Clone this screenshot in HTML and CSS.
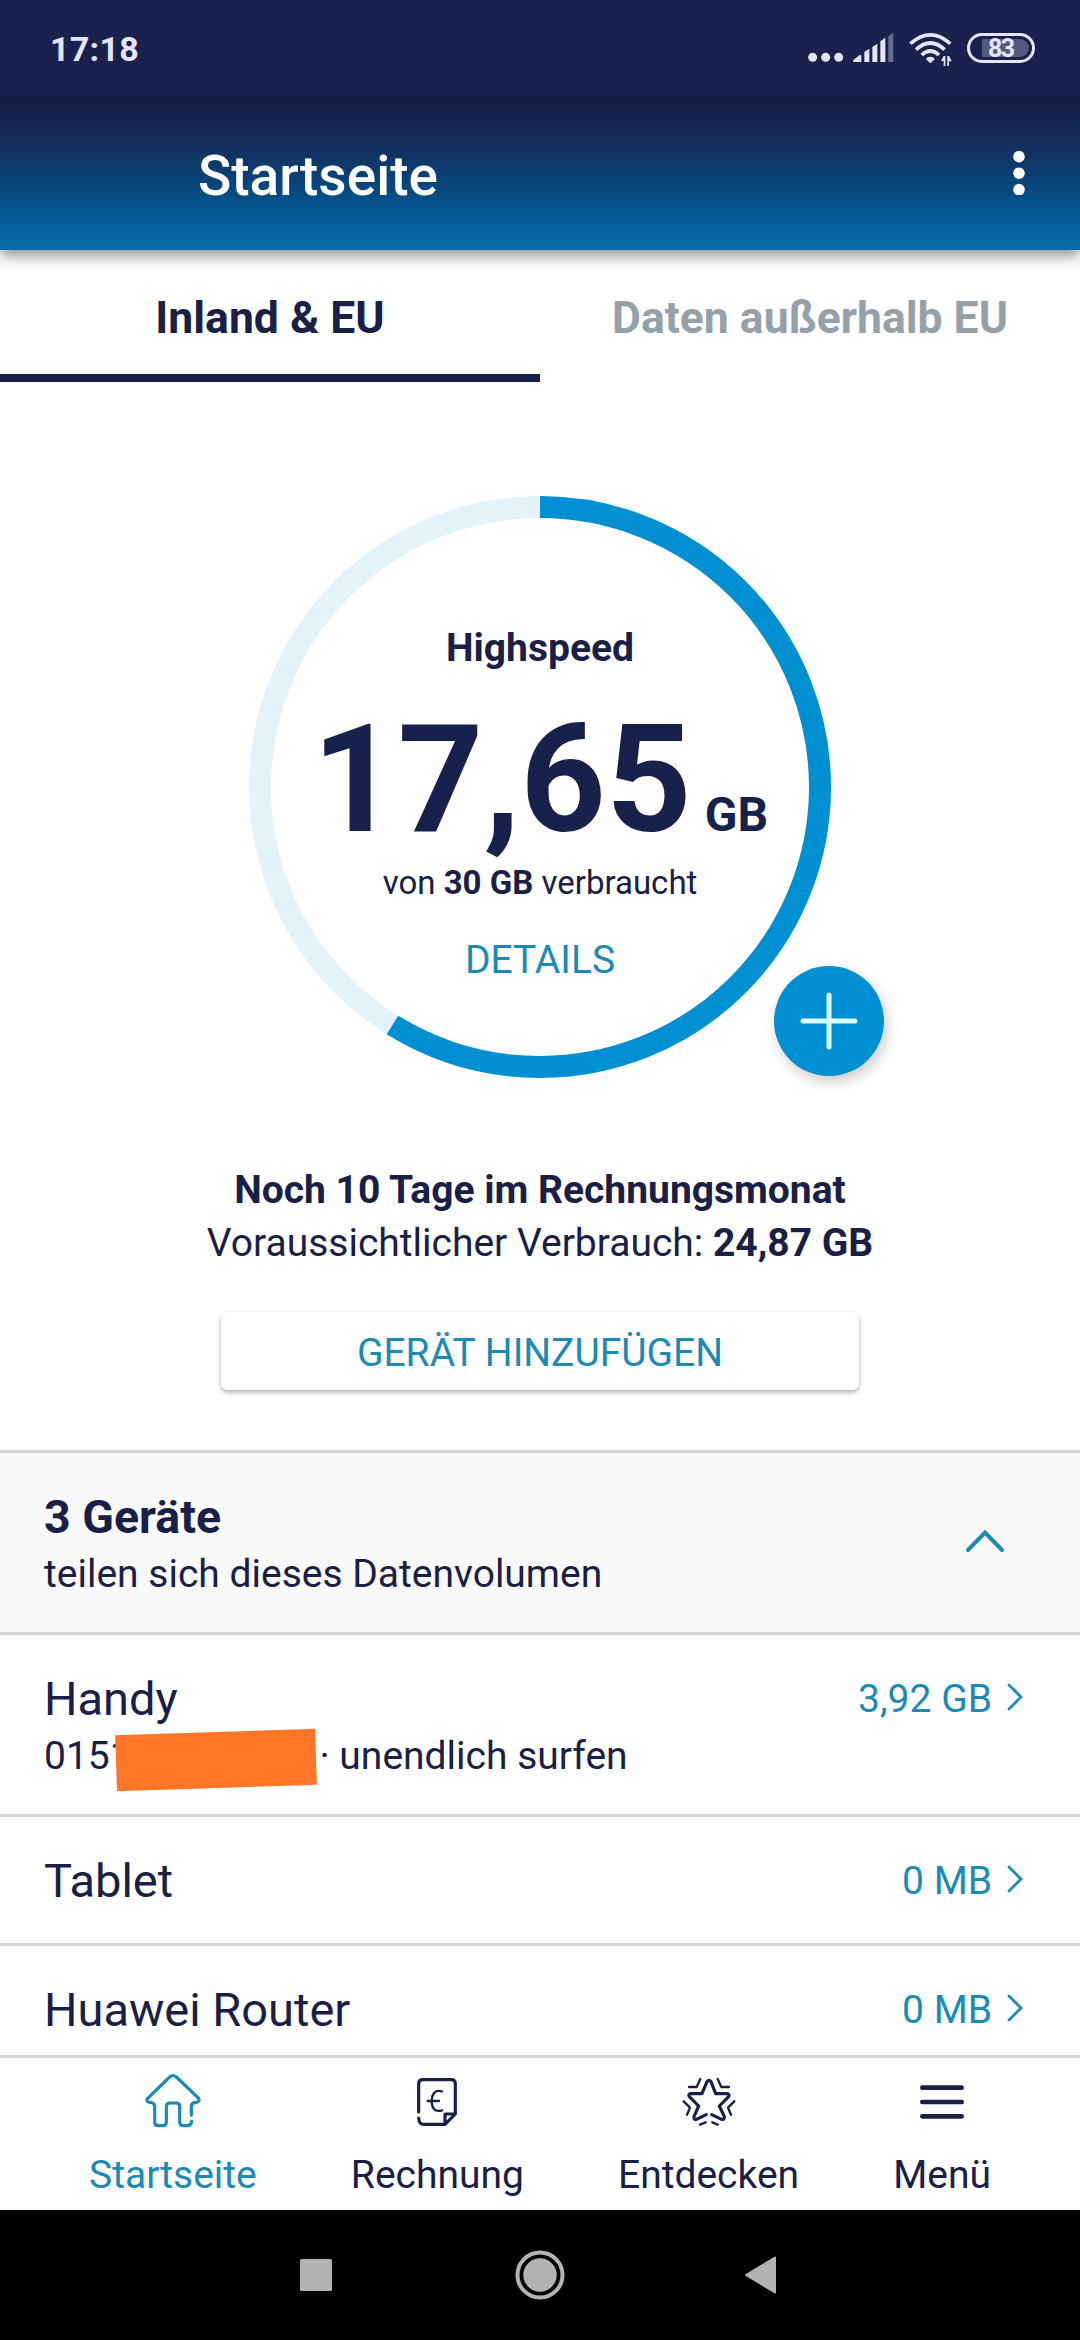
FILE: index.html
```html
<!DOCTYPE html>
<html lang="de">
<head>
<meta charset="utf-8">
<title>Startseite</title>
<link rel="stylesheet" href="styles.css">
</head>
<body>
<div class="screen">
  <div class="status">
    <span class="clock">17:18</span>
    <div class="status-icons">
      <svg class="signal" viewBox="80 90 450 120" width="150" height="40">
        <g fill="#e4e6f8">
          <circle cx="97" cy="172" r="13.5"/><circle cx="136" cy="172" r="13.5"/><circle cx="175" cy="172" r="13.5"/>
          <path d="M219 186V180L239 164L243 166V186Z"/>
          <path d="M252 186V156L267 146V186Z"/>
          <path d="M276 186V141L291 131V186Z"/>
          <path d="M300 186V124L315 113V186Z"/>
          <path d="M324 186V109L339 98V186Z" fill="#646a92"/>
          <path d="M437 178Q438 171 450 170Q462 171 463 178L450 190Z"/>
          <path d="M482 183L490 168H495V198H490V183ZM501 168H506L514 184H506V198H501Z"/>
        </g>
        <g fill="none" stroke="#e4e6f8" stroke-width="11">
          <path d="M390 131Q450 78 510 131"/>
          <path d="M407 149Q450 109 493 149"/>
          <path d="M424 165Q450 141 476 165"/>
        </g>
      </svg>
      <div class="battery"><span class="level">83</span></div>
    </div>
  </div>

  <header class="appbar">
    <h1 class="title">Startseite</h1>
    <svg class="more" viewBox="0 0 12 44" width="12" height="44" fill="#fff"><circle cx="6" cy="5.7" r="5.8"/><circle cx="6" cy="22.2" r="5.8"/><circle cx="6" cy="38.6" r="5.8"/></svg>
  </header>

  <nav class="tabs">
    <div class="tab tab-active">Inland &amp; EU</div>
    <div class="tab">Daten außerhalb EU</div>
  </nav>

  <main class="content">
    <section class="gauge">
      <svg class="ring" viewBox="0 0 582 582" width="582" height="582" fill="none" stroke-width="22">
        <circle cx="291" cy="291" r="280" stroke="#e4f3fa"/>
        <circle cx="291" cy="291" r="280" stroke="#008fd0" pathLength="30" stroke-dasharray="17.65 30" transform="rotate(-90 291 291)"/>
      </svg>
      <div class="gauge-label">Highspeed</div>
      <div class="gauge-value"><span class="number">17,65</span><span class="unit">GB</span></div>
      <div class="gauge-total">von <b>30 GB</b> verbraucht</div>
      <div class="details">DETAILS</div>
      <div class="fab">
        <svg viewBox="0 0 58 58" width="58" height="58" stroke="#dcffff" stroke-width="5" stroke-linecap="round"><path d="M29 3V55M3 29H55"/></svg>
      </div>
    </section>

    <p class="forecast"><b>Noch 10 Tage im Rechnungsmonat</b></p>
    <p class="forecast">Voraussichtlicher Verbrauch: <b>24,87 GB</b></p>
    <div class="add-device">GERÄT HINZUFÜGEN</div>

    <section class="devices">
      <div class="row row-head">
        <div class="row-text">
          <div class="name name-bold">3 Geräte</div>
          <div class="sub">teilen sich dieses Datenvolumen</div>
        </div>
        <svg class="collapse" viewBox="0 0 40 26" width="40" height="26"><path d="M3 22L20 4.500L37 22"/></svg>
      </div>
      <div class="row">
        <div class="row-text">
          <div class="name">Handy</div>
          <div class="sub phone"><span class="number-start">0151</span><span class="redaction"></span><span>· unendlich surfen</span></div>
        </div>
        <div class="amount">3,92 GB<svg class="chevron" viewBox="0 0 16 28" width="16" height="28"><path d="M2 2L14 14L2 26"/></svg></div>
      </div>
      <div class="row">
        <div class="name">Tablet</div>
        <div class="amount">0 MB<svg class="chevron" viewBox="0 0 16 28" width="16" height="28"><path d="M2 2L14 14L2 26"/></svg></div>
      </div>
      <div class="row row-last">
        <div class="name">Huawei Router</div>
        <div class="amount">0 MB<svg class="chevron" viewBox="0 0 16 28" width="16" height="28"><path d="M2 2L14 14L2 26"/></svg></div>
      </div>
    </section>
  </main>

  <nav class="bottom">
    <div class="item item-active">
      <svg class="icon" viewBox="243 84 198 198"><path d="M397 226V200Q397 190 406 188L414 187Q424 183 418 174L352 111Q342 103 332 111L266 175Q260 184 270 187L279 188Q287 190 287 200V246Q287 257 298 257H312Q322 257 322 246V200Q322 189 333 189H352Q362 189 362 200V246Q362 257 373 257H386Q397 256 398 244"/></svg>
      <span>Startseite</span>
    </div>
    <div class="item">
      <svg class="icon" viewBox="1032 84 198 198"><path d="M1076 216V132Q1076 119 1089 119H1173Q1186 119 1186 132V222L1155 253H1090Q1077 253 1076 234M1155 253V222H1186"/><path class="fine" d="M1146 154C1122 147 1115 166 1115 183C1115 202 1123 218 1146 211M1103 183H1137"/></svg>
      <span>Rechnung</span>
    </div>
    <div class="item">
      <svg class="icon" viewBox="282 84 198 198"><path d="M373 224L343 238Q334 240 336 230L350 198L322 170Q317 162 327 161H360L375 125Q381 117 387 125L401 161H434Q445 162 440 170L412 198L427 230Q429 240 419 238L389 224"/><path class="fine" d="M355 117L344 141H321M407 117L418 141H441M305 184L324 203L315 224M457 184L438 203L447 224M371 247L354 254M391 247L407 254"/></svg>
      <span>Entdecken</span>
    </div>
    <div class="item">
      <svg class="icon icon-menu" viewBox="981 84 198 198"><path d="M1021 143H1139M1021 186H1139M1021 229H1139"/></svg>
      <span>Menü</span>
    </div>
  </nav>

  <div class="system">
    <svg viewBox="0 0 34 34" width="34" height="34" fill="#b3b3b3"><rect x="1" y="1" width="32" height="32" rx="1.500"/></svg>
    <svg class="home-button" viewBox="0 0 50 50" width="50" height="50" fill="#b3b3b3"><circle cx="25" cy="25" r="16.700"/><circle cx="25" cy="25" r="22.500" fill="none" stroke="#b3b3b3" stroke-width="4"/></svg>
    <svg viewBox="0 0 34 40" width="34" height="40" fill="#b3b3b3" stroke="#b3b3b3" stroke-width="2" stroke-linejoin="round"><path d="M2 20L31 2.500V37.500Z"/></svg>
  </div>
</div>
</body>
</html>
```
FILE: styles.css
```css
* { box-sizing: border-box; }

body {
  margin: 0;
  background: #fff;
  color: #1a2045;
  font-family: Roboto, "Liberation Sans", sans-serif;
  font-size: 39px;
}

.screen {
  width: 1080px;
  height: 2340px;
  display: flex;
  flex-direction: column;
  overflow: hidden;
}

/* Status bar */
.status {
  flex: none;
  height: 96px;
  display: flex;
  align-items: center;
  justify-content: space-between;
  padding: 0 45px 0 50px;
  background: #1a214d;
  color: #e4e6f8;
}
.clock { font-size: 34px; font-weight: 700; letter-spacing: 0.3px; padding-top: 1px; }
.status-icons { display: flex; align-items: center; gap: 10px; }
.signal { margin-top: 4px; }
.battery {
  width: 68px;
  height: 30px;
  border: 3px solid #e4e6f8;
  border-radius: 15px;
  padding: 3px 3px 3px 12px;
}
.level {
  display: block;
  width: 47px;
  height: 18px;
  padding-left: 6px;
  border-radius: 1px 9px 9px 1px;
  background: #545b83;
  font-size: 25px;
  font-weight: 700;
  line-height: 19px;
  letter-spacing: -1.500px;
}

/* App bar */
.appbar {
  flex: none;
  height: 154px;
  display: flex;
  align-items: center;
  justify-content: space-between;
  padding: 6px 55px 0 198px;
  background: linear-gradient(#151c40 0%, #15254f 18%, #103565 40%, #07497f 61%, #065d98 80%, #066da8 100%);
  box-shadow: 0 6px 13px rgba(0, 0, 0, 0.42);
  clip-path: inset(0 0 -24px 0);
  position: relative;
  z-index: 1;
}
.title { margin: 0; font-size: 55px; font-weight: 500; line-height: 64px; color: #fff; }
.more { margin-top: -6px; }

/* Tabs */
.tabs { flex: none; height: 132px; display: flex; }
.tab {
  width: 50%;
  padding-top: 40px;
  font-size: 44.500px;
  line-height: 57px;
  font-weight: 700;
  text-align: center;
  color: #96a1a7;
  border-bottom: 8px solid transparent;
}
.tab-active { color: #1a2045; border-bottom-color: #18204a; }

/* Usage */
.content {
  flex: none;
  height: 1673px;
  overflow: hidden;
  display: flex;
  flex-direction: column;
  align-items: center;
}
.gauge {
  position: relative;
  flex: none;
  width: 582px;
  height: 582px;
  margin: 114px 0 86px;
  padding-top: 129px;
  display: flex;
  flex-direction: column;
  align-items: center;
}
.ring { position: absolute; left: 0; top: 0; }
.gauge-label { font-weight: 700; line-height: 46px; }
.gauge-value {
  display: flex;
  align-items: baseline;
  margin-top: 34px;
  line-height: 150px;
  height: 150px;
  font-weight: 700;
  color: #18204c;
}
.number { font-size: 149.500px; }
.unit { font-size: 48px; margin-left: 13px; }
.gauge-total { margin-top: 8px; font-size: 33px; line-height: 40px; }
.details { margin-top: 34px; line-height: 46px; color: #1c8ab3; }
.fab {
  position: absolute;
  left: 525px;
  top: 470px;
  width: 110px;
  height: 110px;
  display: flex;
  align-items: center;
  justify-content: center;
  border-radius: 50%;
  background: #008fd0;
  box-shadow: 3px 6px 14px rgba(0, 0, 0, 0.2);
}

.forecast { margin: 0; line-height: 53px; }
.add-device {
  flex: none;
  width: 638px;
  height: 78px;
  margin: 42px 0 60px;
  padding-top: 3px;
  line-height: 76px;
  text-align: center;
  color: #1c8ab3;
  border-radius: 6px;
  box-shadow: 0 3px 5px rgba(0, 0, 0, 0.26), 0 0 2px rgba(0, 0, 0, 0.14);
}

/* Device list */
.devices { width: 100%; border-top: 3px solid #d0d5d7; }
.row {
  display: flex;
  justify-content: space-between;
  align-items: flex-start;
  padding: 35px 57px 30px 44px;
  border-bottom: 3px solid #d0d5d7;
}
.row-last { border-bottom: 0; padding-bottom: 15px; }
.name { font-size: 47px; line-height: 58px; height: 61px; }
.row-text .name { height: 58px; }
.row-last .name { height: 58px; }
.name-bold { font-weight: 700; font-size: 46.500px; }
.sub { line-height: 57px; height: 56px; }
.row-head { background: #f9f9f9; padding: 35px 75px 30px 44px; }
.collapse { margin-top: 40px; fill: none; stroke: #1c8ab3; stroke-width: 4; stroke-linecap: round; }
.phone { display: flex; }
.number-start { width: 72px; white-space: nowrap; }
.redaction {
  width: 199.500px;
  height: 56px;
  margin-right: 4px;
  background: #ff7628;
  transform: translateY(4px) rotate(-1.900deg);
}
.amount { display: flex; line-height: 58px; color: #1c8ab3; }
.chevron { margin: 13px 0 0 15px; fill: none; stroke: #1c8ab3; stroke-width: 2.800; stroke-linecap: round; }

/* Bottom navigation */
.bottom {
  flex: none;
  height: 155px;
  display: flex;
  justify-content: space-between;
  padding: 10px 89px 0;
  border-top: 3px solid #d0d7d5;
}
.item { display: flex; flex-direction: column; align-items: center; gap: 18px; line-height: 46px; }
.item-active { color: #1c8ab3; }
.icon { width: 66px; height: 66px; fill: none; stroke: currentColor; stroke-width: 9.500; stroke-linecap: round; stroke-linejoin: round; }
.icon-menu { stroke-width: 14; }
.fine { stroke-width: 7; }

/* System navigation */
.system {
  flex: none;
  height: 130px;
  display: flex;
  align-items: center;
  justify-content: space-between;
  padding: 0 302px 0 299px;
  background: #000;
}
.home-button { margin-left: 3px; }
```
